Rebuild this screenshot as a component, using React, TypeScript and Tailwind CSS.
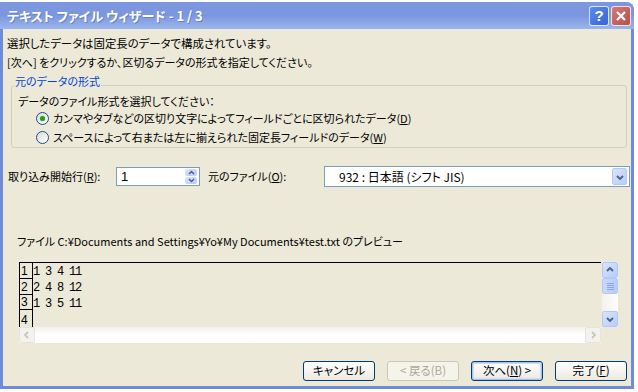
import React from "react";

const jp = "[font-family:'Noto_Sans_CJK_JP',sans-serif] [font-feature-settings:'palt']";

function Radio({ checked }: { checked?: boolean }) {
  return (
    <span className="w-[13px] h-[13px] rounded-full border border-[#1c5180] bg-gradient-to-br from-[#dcdcd4] to-white flex items-center justify-center shrink-0">
      {checked && <span className="w-[5px] h-[5px] rounded-full bg-[#21a121] shadow-[0_0_1px_#5fd35f]" />}
    </span>
  );
}

function Arrow({ dir, color = "#4d6185" }: { dir: "up" | "down" | "left" | "right"; color?: string }) {
  const d = {
    up: "M2 6 L5 3 L8 6",
    down: "M2 4 L5 7 L8 4",
    left: "M6 2 L3 5 L6 8",
    right: "M4 2 L7 5 L4 8",
  }[dir];
  return (
    <svg width="10" height="10" viewBox="0 0 10 10">
      <path d={d} fill="none" stroke={color} strokeWidth="1.8" />
    </svg>
  );
}

function ScrollBtn({ dir, faded }: { dir: "up" | "down" | "left" | "right"; faded?: boolean }) {
  return (
    <div
      className={
        "w-[16px] h-[16px] rounded-[2px] border flex items-center justify-center " +
        (faded ? "border-[#e4e4dd] bg-[#f3f2ee]" : "border-[#b4c8f6] bg-gradient-to-br from-[#d8e4fd] to-[#b9ccf8]")
      }
    >
      <Arrow dir={dir} color={faded ? "#c9c7ba" : "#4d6185"} />
    </div>
  );
}

function Btn({ children, disabled, def }: { children: React.ReactNode; disabled?: boolean; def?: boolean }) {
  return (
    <div
      className={
        "w-[72px] h-[20px] rounded-[3px] border flex items-center justify-center text-[11.5px] leading-none " +
        (disabled
          ? "border-[#c9c7ba] bg-[#f5f4ea] text-[#aca899]"
          : "border-[#003c74] bg-gradient-to-b from-white to-[#ece9e0] text-black " +
            (def ? "shadow-[inset_0_0_0_1px_#a8c4f0,inset_0_0_0_2px_#cfdcf7]" : ""))
      }
    >
      {children}
    </div>
  );
}

export default function App() {
  return (
    <div className={"w-[638px] h-[392px] bg-white pt-[2px] overflow-hidden text-black " + jp}>
      <div className="w-[634px] h-[387px] flex flex-col rounded-tr-[8px] overflow-hidden bg-[#6f8bd8]">
        {/* title bar */}
        <div className="h-[27px] shrink-0 flex items-center pl-[7px] pr-[3px] bg-gradient-to-b from-[#7c97df] via-[#7b97e0] to-[#9cb5ec]">
          <span className="text-white text-[13px] font-bold [text-shadow:1px_1px_0_#6a80c0]">
            テキスト ファイル ウィザード - 1 / 3
          </span>
          <div className="ml-auto flex gap-[2px]">
            <div className="w-[20px] h-[20px] rounded-[3px] border border-white/80 bg-gradient-to-br from-[#5a8cf0] to-[#3864d4] flex items-center justify-center text-white text-[15px] font-bold leading-none [font-family:'Liberation_Sans',sans-serif]">
              ?
            </div>
            <div className="w-[20px] h-[20px] rounded-[3px] border border-white/80 bg-gradient-to-br from-[#d57a73] to-[#b4504c] flex items-center justify-center">
              <svg width="12" height="12" viewBox="0 0 12 12">
                <path d="M2 2 L10 10 M10 2 L2 10" stroke="white" strokeWidth="2.2" />
              </svg>
            </div>
          </div>
        </div>

        {/* body */}
        <div className="flex-1 mx-[3px] mb-[3px] bg-[#ece9d8] flex flex-col text-[11px]">
          <div className="pt-[5px] pl-[4px] leading-[19px]">
            <div className="text-[11.4px]">選択したデータは固定長のデータで構成されています。</div>
            <div>[次へ] をクリックするか、区切るデータの形式を指定してください。</div>
          </div>

          {/* group */}
          <div className="relative mt-[13px] ml-[8px] w-[616px] h-[63px] border border-[#d0d0bf] rounded-[3px] shrink-0">
            <span className="absolute left-[2px] top-[-12px] px-[1px] bg-[#ece9d8] text-[#0046d5] leading-[14px]">
              元のデータの形式
            </span>
            <div className="pl-[6px] pt-[8px] leading-[14px]">データのファイル形式を選択してください：</div>
            <div className="flex items-center gap-[4px] pl-[24px] h-[19px] mt-[1px]">
              <Radio checked />
              <span>
                カンマやタブなどの区切り文字によってフィールドごとに区切られたデータ(<span className="underline">D</span>)
              </span>
            </div>
            <div className="flex items-center gap-[4px] pl-[24px] h-[19px]">
              <Radio />
              <span>
                スペースによって右または左に揃えられた固定長フィールドのデータ(<span className="underline">W</span>)
              </span>
            </div>
          </div>

          {/* start row / origin */}
          <div className="flex items-center mt-[18px] h-[21px] shrink-0">
            <span className="pl-[5px] w-[113px]">
              取り込み開始行(<span className="underline">R</span>):
            </span>
            <div className="w-[84px] h-[19px] border border-[#7f9db9] bg-white flex items-center pl-[4px] pr-[2px]">
              <span className="flex-1 [font-family:'Liberation_Sans',sans-serif] text-[13px]">1</span>
              <div className="w-[12px] h-[15px] flex flex-col gap-[1px]">
                <div className="flex-1 rounded-[2px] bg-gradient-to-br from-[#d8e4fd] to-[#b9ccf8] flex items-center justify-center">
                  <svg width="7" height="5" viewBox="0 0 7 5"><path d="M1 4 L3.5 1.5 L6 4" fill="none" stroke="#4d6185" strokeWidth="1.5" /></svg>
                </div>
                <div className="flex-1 rounded-[2px] bg-gradient-to-br from-[#d8e4fd] to-[#b9ccf8] flex items-center justify-center">
                  <svg width="7" height="5" viewBox="0 0 7 5"><path d="M1 1 L3.5 3.5 L6 1" fill="none" stroke="#4d6185" strokeWidth="1.5" /></svg>
                </div>
              </div>
            </div>
            <span className="ml-[8px] w-[116px]">
              元のファイル(<span className="underline">O</span>):
            </span>
            <div className="w-[306px] h-[21px] border border-[#7f9db9] bg-white flex items-center pl-[14px] pr-[2px]">
              <span className="flex-1 text-[12px]">932 : 日本語 (シフト JIS)</span>
              <div className="w-[15px] h-[17px] rounded-[2px] border border-[#b4c8f6] bg-gradient-to-br from-[#d8e4fd] to-[#b9ccf8] flex items-center justify-center">
                <Arrow dir="down" />
              </div>
            </div>
          </div>

          <div className="mt-[47px] pl-[14px] leading-[14px]">
            ファイル C:¥Documents and Settings¥Yo¥My Documents¥test.txt のプレビュー
          </div>

          {/* preview */}
          <div className="mt-[14px] ml-[16px] w-[600px] flex flex-col shrink-0">
            <div className="flex">
              <div className="w-[582px] h-[65px] border-t border-l border-black flex overflow-hidden">
                <div className="w-[13px] flex flex-col shrink-0">
                  {["1", "2", "3", "4"].map((n, i) => (
                    <div
                      key={n}
                      className={
                        "h-[16px] border-r border-b border-black flex items-end pl-[1px] text-[12px] leading-[13px] [font-family:'Liberation_Sans',sans-serif] " +
                        (i === 3 ? "border-b-0 h-[17px]" : "")
                      }
                    >
                      {n}
                    </div>
                  ))}
                </div>
                <div className="flex flex-col [font-family:'Liberation_Mono',monospace] text-[12px] tracking-[-1.2px] whitespace-pre leading-[16px] pt-[1px]">
                  <div>1 3 4 11</div>
                  <div>2 4 8 12</div>
                  <div>1 3 5 11</div>
                </div>
              </div>
              <div className="ml-[1px] w-[16px] h-[65px] flex flex-col bg-gradient-to-r from-[#f3f1ec] to-[#fefefe]">
                <ScrollBtn dir="up" />
                <div className="w-[16px] h-[16px] rounded-[2px] border border-[#b4c8f6] bg-gradient-to-r from-[#c9d8fc] to-[#b9ccf8] flex flex-col items-center justify-center gap-[1px]">
                  <div className="w-[7px] h-[1px] bg-[#8ca5e2]" />
                  <div className="w-[7px] h-[1px] bg-[#8ca5e2]" />
                  <div className="w-[7px] h-[1px] bg-[#8ca5e2]" />
                  <div className="w-[7px] h-[1px] bg-[#8ca5e2]" />
                </div>
                <div className="flex-1" />
                <ScrollBtn dir="down" />
              </div>
            </div>
            <div className="w-[582px] h-[16px] flex bg-gradient-to-b from-[#f3f1ec] via-white to-[#fefefe]">
              <ScrollBtn dir="left" faded />
              <div className="flex-1" />
              <ScrollBtn dir="right" faded />
            </div>
          </div>

          <div className="mt-auto mb-[5px] flex justify-end gap-[12px] pr-[4px]">
            <Btn>キャンセル</Btn>
            <Btn disabled>&lt; 戻る(B)</Btn>
            <Btn def>
              次へ(<span className="underline">N</span>) &gt;
            </Btn>
            <Btn>
              完了(<span className="underline">F</span>)
            </Btn>
          </div>
        </div>
      </div>
    </div>
  );
}
